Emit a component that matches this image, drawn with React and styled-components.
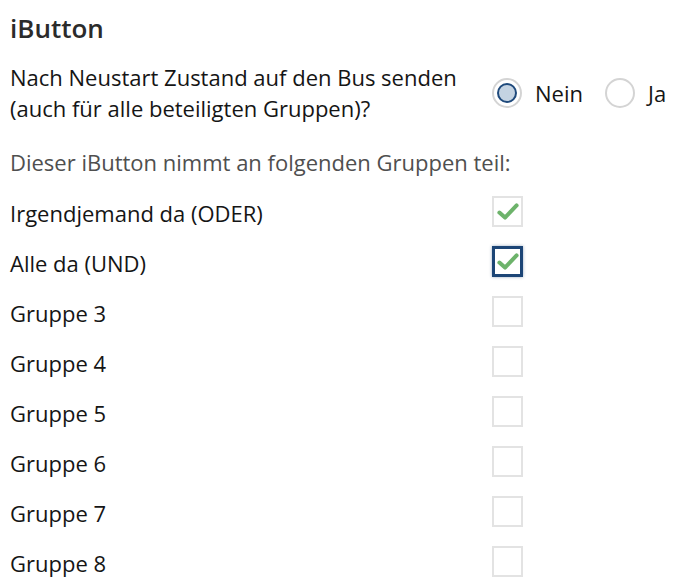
import React from "react";
import styled, { createGlobalStyle } from "styled-components";

const Global = createGlobalStyle`
  html, body { margin: 0; padding: 0; background: #fff; }
  body { font-family: "Open Sans", "Noto Sans", sans-serif; color: #151515; }
`;

const Page = styled.div`
  padding: 10px 0 0 10px;
  width: 668px;
`;

const Title = styled.h2`
  margin: 0;
  font-size: 26px;
  font-weight: 600;
  line-height: 36px;
  color: #2b2b2b;
`;

const QuestionRow = styled.div`
  display: flex;
  align-items: center;
  margin-top: 16px;
`;

const Question = styled.div`
  width: 482px;
  font-size: 22px;
  line-height: 31px;
`;

const RadioGroup = styled.div`
  display: flex;
  align-items: center;
`;

const RadioLabel = styled.label`
  display: flex;
  align-items: center;
  gap: 13px;
  font-size: 22px;
  line-height: 31px;
  margin-right: ${(p) => p.$gap || 0}px;
`;

const RadioCircle = styled.span`
  box-sizing: border-box;
  width: 30px;
  height: 30px;
  border-radius: 50%;
  border: 2px solid #d4d4d4;
  display: flex;
  align-items: center;
  justify-content: center;
  &::after {
    content: "";
    display: ${(p) => (p.$checked ? "block" : "none")};
    box-sizing: border-box;
    width: 20px;
    height: 20px;
    border-radius: 50%;
    border: 2px solid #1f4a7c;
    background: #c4d3e2;
  }
`;

const Hint = styled.div`
  margin-top: 23px;
  font-size: 22px;
  line-height: 31px;
  color: #4f4f4f;
`;

const GroupList = styled.div`
  display: flex;
  flex-direction: column;
  margin-top: 10px;
`;

const GroupRow = styled.div`
  display: flex;
  align-items: center;
  height: 50px;
`;

const GroupLabel = styled.div`
  width: 482px;
  font-size: 22px;
  line-height: 31px;
  color: #151515;
`;

const Box = styled.span`
  box-sizing: border-box;
  width: 31px;
  height: 31px;
  margin-bottom: 3px;
  border: ${(p) => (p.$focused ? "3px solid #1c4576" : "2px solid #e3e3e3")};
  box-shadow: ${(p) => (p.$focused ? "0 0 3px rgba(28,69,118,0.45)" : "none")};
  display: flex;
  align-items: center;
  justify-content: center;
`;

const Check = () => (
  <svg width="22" height="17" viewBox="0 0 22 17">
    <path
      d="M2.4 9.6 L8 14.6 L19.6 2.4"
      fill="none"
      stroke="#6db36b"
      strokeWidth="4"
      strokeLinecap="round"
      strokeLinejoin="round"
      style={{ filter: "blur(0.7px)" }}
    />
  </svg>
);

const groups = [
  { name: "Irgendjemand da (ODER)", checked: true },
  { name: "Alle da (UND)", checked: true, focused: true },
  { name: "Gruppe 3" },
  { name: "Gruppe 4" },
  { name: "Gruppe 5" },
  { name: "Gruppe 6" },
  { name: "Gruppe 7" },
  { name: "Gruppe 8" },
];

export default function App() {
  return (
    <Page>
      <Global />
      <Title>iButton</Title>
      <QuestionRow>
        <Question>
          Nach Neustart Zustand auf den Bus senden
          <br />
          (auch für alle beteiligten Gruppen)?
        </Question>
        <RadioGroup>
          <RadioLabel $gap={22}>
            <RadioCircle $checked />
            Nein
          </RadioLabel>
          <RadioLabel>
            <RadioCircle />
            Ja
          </RadioLabel>
        </RadioGroup>
      </QuestionRow>
      <Hint>Dieser iButton nimmt an folgenden Gruppen teil:</Hint>
      <GroupList>
        {groups.map((g) => (
          <GroupRow key={g.name}>
            <GroupLabel>{g.name}</GroupLabel>
            <Box $focused={g.focused}>{g.checked && <Check />}</Box>
          </GroupRow>
        ))}
      </GroupList>
    </Page>
  );
}
